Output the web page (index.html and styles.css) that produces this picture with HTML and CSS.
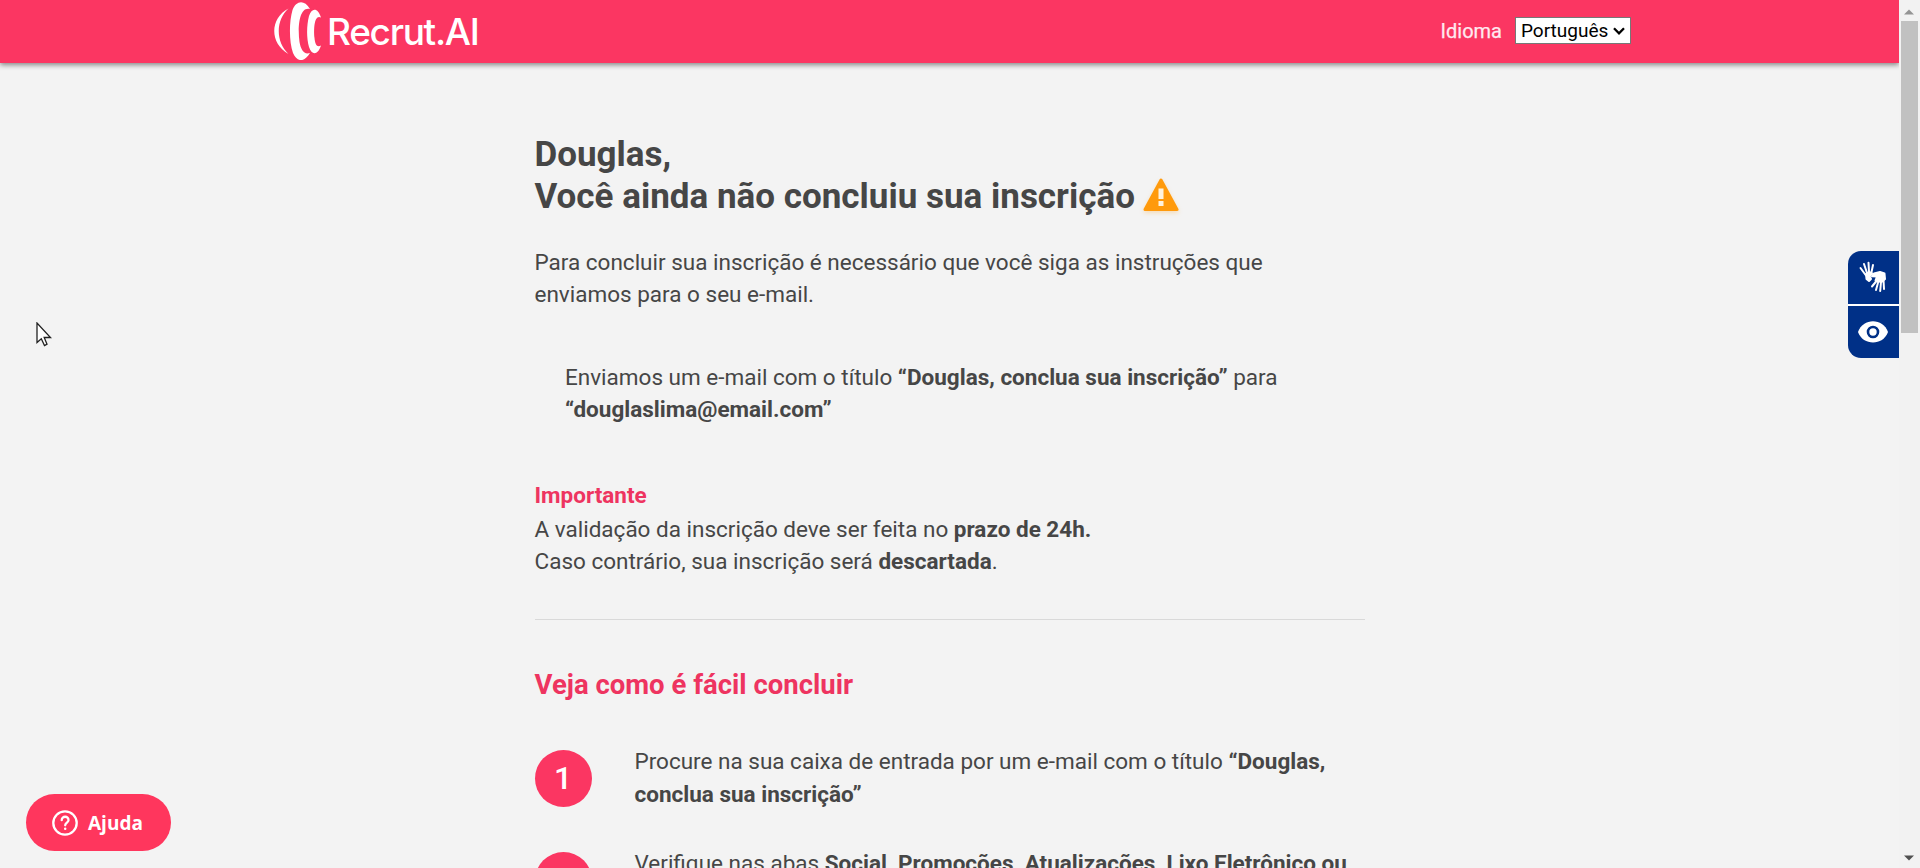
FILE: index.html
```html
<!DOCTYPE html>
<html lang="pt-BR">
<head>
<meta charset="utf-8">
<title>Recrut.AI</title>
<link rel="stylesheet" href="styles.css">
</head>
<body>
<div class="page">
  <header class="topbar">
    <div class="logo">
      <svg class="logo-mark" width="50" height="60" viewBox="0 0 50 60" fill="#fff">
        <path d="M15.500 8.500C-3 18-4 43 15.500 54C2.500 42 2.500 20 15.500 8.500Z"/>
        <path d="M37 9C31-1 23 1 19.500 10C16 22 16 42 20 53C24 62 31 63 37 53C31 55 28 50 26.500 42C24.500 28 26 6 37 9Z"/>
        <path d="M48 17.500C45 8 39 7 36 16C33.500 26 33.500 38 36 47C39 56 45 55 48 45.500C44 48 42 44 41.500 38C40.500 28 41.500 14 48 17.500Z"/>
      </svg>
      <span class="logo-text">Recrut.AI</span>
    </div>
    <div class="language">
      <span class="language-label">Idioma</span>
      <div class="select"><span>Português</span>
        <svg width="12" height="8" viewBox="0 0 12 8" fill="none" stroke="#000" stroke-width="2.300"><path d="M1 1.300L6 6.300L11 1.300"/></svg>
      </div>
    </div>
  </header>
  <main class="content">
    <h1 class="title">Douglas,<br><span class="title-line">Você ainda não concluiu sua inscrição</span><svg class="warning" width="36" height="34" viewBox="0 0 36 34"><path d="M18 2L34 31.500H2Z" fill="#ff9a0c" stroke="#ff9a0c" stroke-width="3" stroke-linejoin="round"/><path d="M15.500 10.500h5v10.500h-5zM15.500 23h5v5h-5z" fill="#fff3df"/></svg></h1>
    <p class="text intro">Para concluir sua inscrição é necessário que você siga as instruções que<br>enviamos para o seu e-mail.</p>
    <p class="text sent">Enviamos um e-mail com o título <b>“Douglas, conclua sua inscrição”</b> para<br><b>“douglaslima@email.com”</b></p>
    <h3 class="important">Importante</h3>
    <p class="text notice">A validação da inscrição deve ser feita no <b>prazo de 24h.</b><br>Caso contrário, sua inscrição será <b>descartada</b>.</p>
    <hr class="rule">
    <h2 class="subtitle">Veja como é fácil concluir</h2>
    <div class="steps">
      <div class="step"><span class="number">1</span><p class="text">Procure na sua caixa de entrada por um e-mail com o título <b>“Douglas,<br>conclua sua inscrição”</b></p></div>
      <div class="step"><span class="number"></span><p class="text">Verifique nas abas <b>Social, Promoções, Atualizações, Lixo Eletrônico ou</b></p></div>
    </div>
  </main>
</div>
<div class="scrollbar">
  <svg width="10" height="6" viewBox="0 0 10 6"><path d="M0 5.500L5 .5L10 5.500Z" fill="#949494"/></svg>
  <div class="thumb"></div>
  <svg class="down" width="10" height="6" viewBox="0 0 10 6"><path d="M0 .5L5 5.500L10 .5Z" fill="#505050"/></svg>
</div>
<div class="access">
  <div class="access-item">
    <svg width="28" height="32" viewBox="0 0 28 32" fill="none" stroke="#fff" stroke-linecap="round" stroke-linejoin="round">
      <path d="M7 13L10 11L13 12.500L10.500 15L12 18L10 20L7.500 18Z" fill="#fff" stroke-width="2"/>
      <path d="M7 14.500L1.500 7M8 12L5 3M10 11L9.500 1.800M12.300 12L14 4" stroke-width="2"/>
      <path d="M15 12.500L21 11L25.500 12.500L26 18L22.500 21L16.500 19.500L18 15.500L13 15.200Z" fill="#fff" stroke-width="2"/>
      <path d="M17.500 20L13 25.500M19.500 20L17 29M22 21L21.200 30M24.500 19L25 28" stroke-width="2"/>
    </svg>
  </div>
  <div class="access-item">
    <svg width="30" height="22" viewBox="0 0 30 22"><path d="M0 11C5-3.500 25-3.500 30 11C25 25 5 25 0 11Z" fill="#fff"/><circle cx="15" cy="11" r="5" fill="#fff" stroke="#003087" stroke-width="2.600"/></svg>
  </div>
</div>
<div class="help">
  <svg width="26" height="26" viewBox="0 0 26 26" fill="none" stroke="#fff" stroke-width="2.300" stroke-linecap="round"><circle cx="13" cy="13" r="11.700"/><path d="M9.700 10.200C9.700 5.500 16.700 5.700 16.500 10.200C16.400 12.500 13.200 12.800 13.200 15.300"/><circle cx="13.200" cy="18.800" r=".6" fill="#fff" stroke-width="1.300"/></svg>
  <span>Ajuda</span>
</div>
<svg class="cursor" width="17" height="26" viewBox="0 0 17 26"><path d="M1 1V20.500L5.300 16.800L8.500 23.500L11 22.200L8.200 15.500H14.500Z" fill="#fff" stroke="#222" stroke-width="1.300"/></svg>
</body>
</html>
```
FILE: styles.css
```css
* { box-sizing: border-box; }
body { margin: 0; height: 868px; overflow: hidden; display: flex; background: #f3f3f3; color: #464646; font-family: Roboto, "Liberation Sans", sans-serif; }
h1, h2, h3, p { margin: 0; }
.page { width: 1899px; height: 868px; overflow: hidden; }
.topbar { height: 63px; padding: 0 268px 0 273px; display: flex; justify-content: space-between; background: #fb3662; box-shadow: 0 2px 5px rgba(0,0,0,.45); }
.logo { display: flex; }
.logo-text { margin-left: 4px; color: #fff; font: 500 37px/64px Inter, sans-serif; letter-spacing: -1.3px; }
.language { display: flex; align-items: center; height: 61px; gap: 13px; }
.language-label { color: #ffe9f0; font-size: 20px; -webkit-text-stroke: .25px #ffe9f0; }
.select { width: 116px; height: 27px; display: flex; align-items: center; justify-content: space-between; padding: 0 5px; border: 1px solid #777; background: #fff; color: #000; font-size: 19px; }
.content { width: 830px; margin: 71px 0 0 534.5px; }
.title { font-size: 35px; line-height: 42px; font-weight: 700; white-space: nowrap; }
.warning { margin-left: 8px; vertical-align: -4px; filter: drop-shadow(0 2px 2px rgba(255,154,12,.25)); }
.text { font-size: 22.5px; line-height: 32px; white-space: nowrap; }
.intro { margin-top: 28px; }
.sent { margin: 51px 0 0 30.5px; }
.important { margin-top: 54px; color: #ee3460; font-size: 22.5px; line-height: 32px; }
.notice { margin-top: 2px; }
.rule { height: 1px; margin: 42px 0 0; border: 0; background: #d9d9d9; }
.subtitle { margin-top: 49px; color: #ee3460; font-size: 27.5px; line-height: 32px; }
.steps { margin-top: 44px; }
.step { height: 102px; display: flex; gap: 43px; }
.step .text { line-height: 32.600px; }
.number { flex: none; width: 57px; height: 57px; margin-top: 5px; border-radius: 50%; background: #fb3662; color: #fff; font-size: 32px; line-height: 56px; font-weight: 500; text-align: center; }
.scrollbar { width: 21px; height: 868px; display: flex; flex-direction: column; align-items: center; padding: 9px 1px 7px 0; background: #f2f2f2; }
.thumb { width: 17px; height: 312px; margin-top: 6px; background: #c1c1c1; }
.down { margin-top: auto; }
.access { position: absolute; left: 1848px; top: 251px; width: 51px; display: grid; gap: 2px; border-radius: 13px 0 0 13px; overflow: hidden; background: #fff; }
.access-item { height: 52.500px; display: flex; align-items: center; justify-content: center; padding-right: 2px; background: #003087; }
.help { position: absolute; left: 26px; top: 794px; width: 145px; height: 57px; border-radius: 29px; display: flex; align-items: center; padding-left: 26px; gap: 10px; background: #ff365d; color: #fff; font: 700 19px "Open Sans", sans-serif; }
.cursor { position: absolute; left: 36px; top: 322px; }
```
